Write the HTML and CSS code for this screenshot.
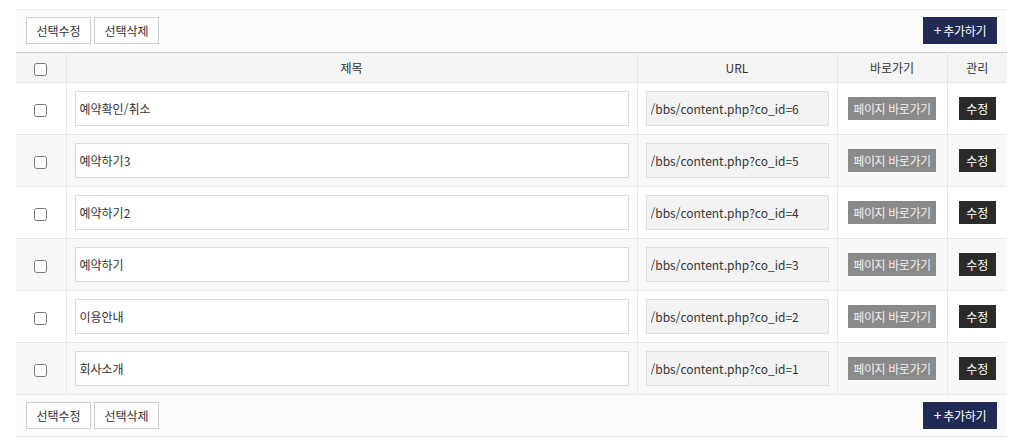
FILE: index.html
```html
<!DOCTYPE html>
<html lang="ko">
<head>
<meta charset="utf-8">
<title>내용관리</title>
<link rel="stylesheet" href="styles.css">
</head>
<body>
<div class="wrap">
  <div class="bar bar-top">
    <div class="btn-group">
      <button class="btn btn-line" type="button">선택수정</button>
      <button class="btn btn-line" type="button">선택삭제</button>
    </div>
    <button class="btn btn-add" type="button"><span class="plus">+</span>추가하기</button>
  </div>
  <table class="list">
    <colgroup>
      <col class="c-chk"><col class="c-title"><col class="c-url"><col class="c-go"><col class="c-mng">
    </colgroup>
    <thead>
      <tr>
        <th><input type="checkbox" class="chk"></th>
        <th>제목</th>
        <th>URL</th>
        <th>바로가기</th>
        <th>관리</th>
      </tr>
    </thead>
    <tbody>
      <tr>
        <td class="t-chk"><input type="checkbox" class="chk"></td>
        <td><input type="text" class="inp" value="예약확인/취소"></td>
        <td><input type="text" class="inp inp-ro" value="/bbs/content.php?co_id=6" readonly></td>
        <td class="t-center"><button class="btn-go" type="button">페이지 바로가기</button></td>
        <td class="t-center"><button class="btn-edit" type="button">수정</button></td>
      </tr>
      <tr>
        <td class="t-chk"><input type="checkbox" class="chk"></td>
        <td><input type="text" class="inp" value="예약하기3"></td>
        <td><input type="text" class="inp inp-ro" value="/bbs/content.php?co_id=5" readonly></td>
        <td class="t-center"><button class="btn-go" type="button">페이지 바로가기</button></td>
        <td class="t-center"><button class="btn-edit" type="button">수정</button></td>
      </tr>
      <tr>
        <td class="t-chk"><input type="checkbox" class="chk"></td>
        <td><input type="text" class="inp" value="예약하기2"></td>
        <td><input type="text" class="inp inp-ro" value="/bbs/content.php?co_id=4" readonly></td>
        <td class="t-center"><button class="btn-go" type="button">페이지 바로가기</button></td>
        <td class="t-center"><button class="btn-edit" type="button">수정</button></td>
      </tr>
      <tr>
        <td class="t-chk"><input type="checkbox" class="chk"></td>
        <td><input type="text" class="inp" value="예약하기"></td>
        <td><input type="text" class="inp inp-ro" value="/bbs/content.php?co_id=3" readonly></td>
        <td class="t-center"><button class="btn-go" type="button">페이지 바로가기</button></td>
        <td class="t-center"><button class="btn-edit" type="button">수정</button></td>
      </tr>
      <tr>
        <td class="t-chk"><input type="checkbox" class="chk"></td>
        <td><input type="text" class="inp" value="이용안내"></td>
        <td><input type="text" class="inp inp-ro" value="/bbs/content.php?co_id=2" readonly></td>
        <td class="t-center"><button class="btn-go" type="button">페이지 바로가기</button></td>
        <td class="t-center"><button class="btn-edit" type="button">수정</button></td>
      </tr>
      <tr>
        <td class="t-chk"><input type="checkbox" class="chk"></td>
        <td><input type="text" class="inp" value="회사소개"></td>
        <td><input type="text" class="inp inp-ro" value="/bbs/content.php?co_id=1" readonly></td>
        <td class="t-center"><button class="btn-go" type="button">페이지 바로가기</button></td>
        <td class="t-center"><button class="btn-edit" type="button">수정</button></td>
      </tr>
    </tbody>
  </table>
  <div class="bar bar-bottom">
    <div class="btn-group">
      <button class="btn btn-line" type="button">선택수정</button>
      <button class="btn btn-line" type="button">선택삭제</button>
    </div>
    <button class="btn btn-add" type="button"><span class="plus">+</span>추가하기</button>
  </div>
</div>
</body>
</html>
```

FILE: styles.css
```css
* { box-sizing: border-box; }
html, body {
  margin: 0;
  padding: 0;
  background: #fff;
}
body {
  font-family: "Noto Sans CJK KR", "Noto Sans", sans-serif;
  font-size: 12px;
  color: #333;
}
.wrap {
  width: 991px;
  margin: 9px 0 0 16px;
}
.bar {
  display: flex;
  justify-content: space-between;
  align-items: center;
  background: #fbfbfb;
  padding: 7px 10px 8px;
}
.bar-top {
  border-top: 1px solid #ececec;
}
.bar-bottom {
  border-bottom: 1px solid #e3e3e3;
  padding: 7px 10px 7px;
}
.btn-group {
  display: flex;
  gap: 3px;
}
.btn {
  font-family: inherit;
  font-size: 12px;
  height: 27px;
  line-height: 25px;
  padding: 0;
  cursor: pointer;
  border-radius: 0;
}
.btn-line {
  width: 65px;
  background: #fff;
  color: #333;
  border: 1px solid #cfcfcf;
}
.btn-add {
  width: 74px;
  background: #222a54;
  color: #fff;
  border: 1px solid #222a54;
  letter-spacing: -0.3px;
}
.plus {
  font-size: 14px;
  margin-right: 2px;
}
.list {
  width: 991px;
  border-collapse: collapse;
  table-layout: fixed;
  border-top: 1px solid #c9c9c9;
}
.c-chk { width: 50px; }
.c-title { width: 571px; }
.c-url { width: 200px; }
.c-go { width: 110px; }
.c-mng { width: 60px; }
.list th {
  height: 30px;
  padding: 0;
  background: #f4f4f4;
  font-weight: normal;
  color: #333;
  text-align: center;
  border-bottom: 1px solid #e6e6e6;
  border-left: 1px solid #e6e6e6;
  line-height: 16px;
}
.list td {
  height: 52px;
  padding: 0 8px;
  border-bottom: 1px solid #e8e8e8;
  border-left: 1px solid #e8e8e8;
  vertical-align: middle;
}
.list th:first-child,
.list td:first-child {
  border-left: 0;
}
.list tbody tr:nth-child(even) td {
  background: #f8f8f8;
}
.t-chk, .t-center {
  text-align: center;
}
.list td.t-center,
.list td.t-chk { padding: 0; }
.chk {
  width: 13px;
  height: 13px;
  margin: 0;
  vertical-align: middle;
}
.inp {
  display: block;
  width: 100%;
  height: 35px;
  padding: 0 4px;
  border: 1px solid #dcdcdc;
  background: #fff;
  font-family: inherit;
  font-size: 12px;
  color: #333;
  border-radius: 0;
  outline: none;
}
.inp-ro {
  background: #f3f3f3;
  border-color: #dedede;
}
.btn-go {
  width: 88px;
  height: 23px;
  padding: 0;
  background: #8a8a8a;
  color: #f0f0f0;
  border: 0;
  border-radius: 0;
  font-family: inherit;
  font-size: 12px;
  line-height: 23px;
  letter-spacing: -0.4px;
  vertical-align: middle;
}
.btn-edit {
  width: 37px;
  height: 23px;
  padding: 0;
  background: #2b2b2b;
  color: #fff;
  border: 0;
  border-radius: 0;
  font-family: inherit;
  font-size: 12px;
  line-height: 23px;
  vertical-align: middle;
}
```
